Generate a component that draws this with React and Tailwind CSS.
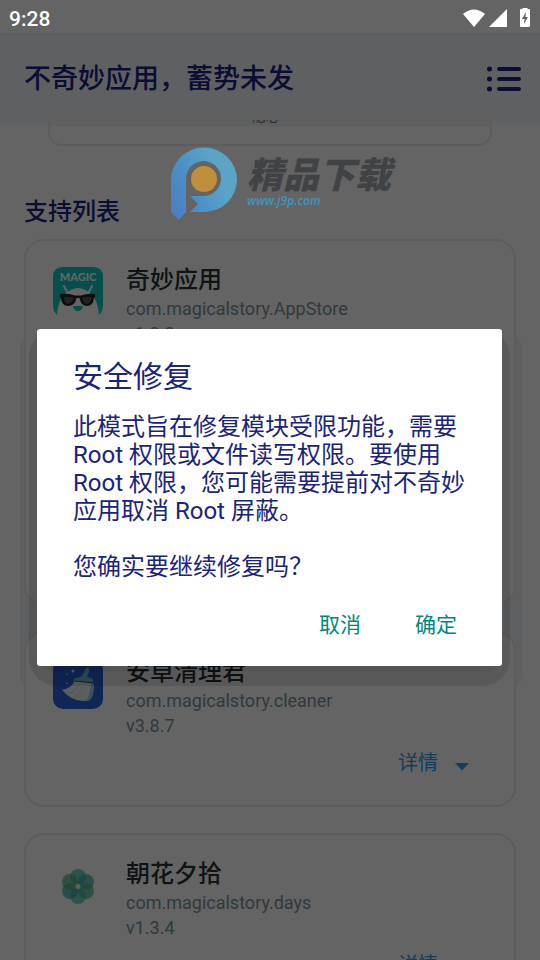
import React, { useState } from 'react';

const MagicIcon = () => (
  <svg viewBox="0 0 50 50" className="w-[50px] h-[50px]">
    <path d="M10 0H40Q50 0 50 10V38Q50 44 46 48Q46 40 41 32H9Q4 40 4 48Q0 44 0 38V10Q0 0 10 0Z" fill="#12c4bf" />
    <path d="M5 48Q5 33 11 28Q25 14 39 28Q45 33 45 48Z" fill="#fafafa" />
    <path d="M11 19L14 25M39 19L36 25" stroke="#fafafa" strokeWidth="2" strokeLinecap="round" />
    <path d="M7 27Q16 26 22 28.500H28Q34 26 42 27V30L41 31Q40 39 34 39Q28 39 26.500 31H23.500Q22 39 15 39Q9 39 8 31L7 30Z" fill="#222" />
    <path d="M11 30Q16 29 21 31Q19 36 15 37Q11 36 11 30ZM29 31Q34 29 39 30Q38 36 34 37Q30 36 29 31Z" fill="#555" />
    <path d="M20 39H30Q29 44 25 44Q21 44 20 39Z" fill="#12c4bf" />
    <text x="25" y="14" textAnchor="middle" className="font-['Lato'] font-black" fontSize="11" fill="#fafafa">MAGIC</text>
  </svg>
);

const CleanerIcon = () => (
  <svg viewBox="0 0 50 50" className="w-[50px] h-[50px]">
    <rect width="50" height="50" rx="10" fill="#2860d8" />
    <path d="M33 9Q37 8 36 13L34 18L40 20V23H21V20L29 17Z" fill="#6cc3d8" />
    <path d="M22 22L41 24Q41 36 37 41Q21 45 9 31Q17 30 22 22Z" fill="#e6eef2" />
    <path d="M38 24L41 24Q41 36 37 41L33 42Q38 34 38 24Z" fill="#8fd0dc" />
    <path d="M14 35Q22 33 26 26M20 39Q28 36 31 27" stroke="#cddae0" fill="none" />
    <path d="M22 22L41 24" stroke="#2a4f90" />
    <circle cx="20" cy="12" r="1.500" fill="#e6eef2" />
    <circle cx="14" cy="15" r="1" fill="#6cc3d8" />
    <circle cx="14" cy="24" r="1" fill="#6cc3d8" />
  </svg>
);

const DaysIcon = () => (
  <svg viewBox="0 0 50 50" className="w-[50px] h-[50px]">
    <g fillOpacity="0.7">
      <circle cx="25" cy="16" r="8" fill="#3cb5a8" />
      <circle cx="33" cy="21" r="8" fill="#35a8a8" />
      <circle cx="33" cy="30" r="8" fill="#46b07c" />
      <circle cx="25" cy="35" r="8" fill="#3cb5a8" />
      <circle cx="17" cy="30" r="8" fill="#35a8a8" />
      <circle cx="17" cy="21" r="8" fill="#46b07c" />
    </g>
    <circle cx="25" cy="25.500" r="2.500" fill="#e8f4ee" />
  </svg>
);

const apps = [
  { name: '奇妙应用', pkg: 'com.magicalstory.AppStore', version: 'v1.2.2', icon: <MagicIcon />, size: 'min-h-[366px]' },
  { name: '安卓清理君', pkg: 'com.magicalstory.cleaner', version: 'v3.8.7', icon: <CleanerIcon />, size: '' },
  { name: '朝花夕拾', pkg: 'com.magicalstory.days', version: 'v1.3.4', icon: <DaysIcon />, size: '' },
];

const StatusBar = () => (
  <div className="h-[33px] flex items-center justify-between px-[9px] pt-1 text-white">
    <span className="text-[21px] leading-6 font-medium">9:28</span>
    <svg viewBox="0 0 68 22" className="w-[68px] h-[22px]" fill="currentColor">
      <path d="M0 6Q11 -3 22 6L11 19Z" />
      <path d="M44 1V19H26Z" />
      <path fillRule="evenodd" d="M58 1H59.500V-1H64.500V1H66Q67 1 67 2V18Q67 19 66 19H58Q57 19 57 18V2Q57 1 58 1ZM63 4L59 11H61.500L61 16L65 9H62.500Z" />
    </svg>
  </div>
);

const AppCard = ({ app }) => (
  <article className={`relative flex flex-col border-2 border-[#e6e6e6] rounded-[20px] bg-[#fafafa] pl-[27px] pr-[45px] pt-[23px] pb-7 ${app.size}`}>
    <div className="flex gap-[23px]">
      <div className="mt-[3px]">{app.icon}</div>
      <div className="min-w-0">
        <h3 className="text-2xl leading-8 font-medium text-[#263238]">{app.name}</h3>
        <p className="text-lg leading-[25px] text-[#78909c]">{app.pkg}</p>
        <p className="text-lg leading-[25px] text-[#78909c]">{app.version}</p>
      </div>
    </div>
    <button type="button" className="mt-auto self-end flex items-center gap-[17px] pt-[11px] text-xl leading-7 text-[#1e9df0]">
      详情
      <svg viewBox="0 0 14 8" className="w-[14px] h-2 mt-2" fill="currentColor">
        <path d="M0 0H14L7 7.500Z" />
      </svg>
    </button>
  </article>
);

const Watermark = () => (
  <div className="absolute left-[171px] top-[147px] flex gap-[10px] pointer-events-none">
    <svg viewBox="0 0 66 73" className="w-[66px] h-[73px]">
      <defs>
        <linearGradient id="logo" x1="0" y1="0.9" x2="0.8" y2="0.5">
          <stop offset="0" stopColor="#4d7cc2" />
          <stop offset="0.5" stopColor="#4a92c6" />
          <stop offset="1" stopColor="#5ca4c6" />
        </linearGradient>
      </defs>
      <path d="M0 65V33A33 32.500 0 0 1 66 33A33 32.500 0 0 1 33 65H19L27 57L19 49H33A17.500 17.500 0 1 0 15 32V65L7.500 73Z" fill="url(#logo)" />
      <circle cx="33" cy="32" r="13" fill="#bf8f3c" />
    </svg>
    <div className="flex flex-col pt-[11px]">
      <span className="text-4xl leading-9 font-black italic text-[#404244]">精品下载</span>
      <span className="mt-px text-xs leading-3 font-semibold italic text-[#4593bd] font-['Open_Sans']">www.j9p.com</span>
    </div>
  </div>
);

const RepairDialog = ({ onClose }) => (
  <div className="absolute inset-0 flex items-center justify-center pl-[37px] pr-[38px] pt-[35px]">
    <div className="relative w-full">
      <div className="absolute -inset-x-2 top-0 -bottom-5 rounded-[28px] bg-black/10" />
      <div className="absolute inset-x-0 top-2 -bottom-[5px] rounded-[16px] bg-black/5" />
      <section role="dialog" aria-labelledby="repair-title" className="relative bg-white rounded-[3px] pl-9 pr-8 pt-7 pb-[19px] text-[#1a237e]">
        <h2 id="repair-title" className="text-3xl leading-10">安全修复</h2>
        <div className="mt-4 text-2xl leading-7">
          <p>此模式旨在修复模块受限功能，需要 Root 权限或文件读写权限。要使用 Root 权限，您可能需要提前对不奇妙应用取消 Root 屏蔽。</p>
          <p className="mt-7">您确实要继续修复吗？</p>
        </div>
        <div className="mt-[22px] flex justify-end gap-[22px] text-[21px] leading-7 text-[#00897b]">
          <button type="button" onClick={onClose} className="px-4 py-2">取消</button>
          <button type="button" onClick={onClose} className="pl-4 pr-[13px] py-2">确定</button>
        </div>
      </section>
    </div>
  </div>
);

export default function App() {
  const [open, setOpen] = useState(true);

  return (
    <div className="relative h-screen overflow-hidden flex flex-col bg-[#fafafa] font-['Roboto','Noto_Sans_CJK_SC',sans-serif]">
      <div className="h-[33px] shrink-0" />
      <header className="relative h-[87px] shrink-0 flex items-center justify-between border-t-2 border-[#e8e8ea] bg-[#eef0f5] pl-6 pr-[18px] pt-0.5 text-[#1a237e]">
        <h1 className="text-[27px] leading-9 font-medium">不奇妙应用，蓄势未发</h1>
        <button type="button" aria-label="菜单">
          <svg viewBox="0 0 36 26" className="w-9 h-[26px]" stroke="currentColor" strokeWidth="4" strokeLinecap="round">
            <path d="M13 3H33M13 13H33M13 23H33" />
            <path d="M3.500 3h.01M3.500 13h.01M3.500 23h.01" strokeWidth="5" />
          </svg>
        </button>
      </header>

      <main className="relative flex-1 min-h-0 overflow-hidden px-6">
        <div className="absolute inset-x-0 top-0 h-1 bg-[#f1f3f6]" />
        <div className="absolute left-5 right-[18px] top-[215px] h-[353px] rounded-[12px] bg-[#eceef2]" />
        <div className="relative mx-6 h-[26px] flex justify-center overflow-hidden border-2 border-t-0 border-[#e6e6e6] rounded-b-[14px] bg-[#fafafa]">
          <div className="absolute inset-x-0 top-0 h-[6px] bg-[#ededed]" />
          <span className="relative -mt-3 pr-2 h-4 text-sm leading-4 text-[#546e7a]">隐心</span>
        </div>
        <h2 className="mt-[50px] text-2xl leading-8 font-medium text-[#1a237e]">支持列表</h2>
        <div className="mt-[11px] flex flex-col gap-[26px]">
          {apps.map(app => <AppCard key={app.pkg} app={app} />)}
        </div>
      </main>

      {open && <div className="absolute inset-0 bg-black/60" />}
      <div className="absolute inset-x-0 top-0"><StatusBar /></div>
      <Watermark />
      {open && <RepairDialog onClose={() => setOpen(false)} />}
    </div>
  );
}
